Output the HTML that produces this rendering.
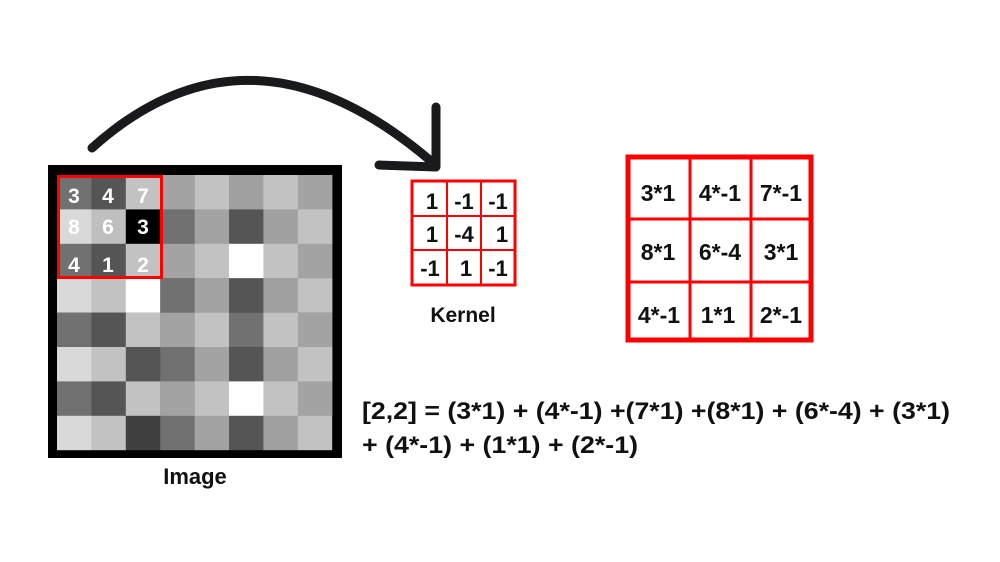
<!DOCTYPE html>
<html><head><style>
html,body{margin:0;padding:0;background:#fff;width:1000px;height:562px;overflow:hidden}
</style></head><body>
<svg width="1000" height="562" viewBox="0 0 1000 562" xmlns="http://www.w3.org/2000/svg" font-family="Liberation Sans, sans-serif" font-weight="bold">
<rect width="1000" height="562" fill="#fff"/>
<path d="M92,148 Q250,6 432,162" fill="none" stroke="#1a1a1c" stroke-width="9" stroke-linecap="round"/>
<path d="M436,107 L436,167 L379,165" fill="none" stroke="#1a1a1c" stroke-width="9" stroke-linecap="round" stroke-linejoin="round"/>
<rect x="48" y="165" width="294" height="293" fill="#000"/>
<g>
<rect x="57" y="175" width="34.6" height="34.6" fill="#717171"/><rect x="91.4" y="175" width="34.6" height="34.6" fill="#555"/><rect x="125.8" y="175" width="34.6" height="34.6" fill="#c2c2c2"/><rect x="160.2" y="175" width="34.6" height="34.6" fill="#a3a3a3"/><rect x="194.6" y="175" width="34.6" height="34.6" fill="#c2c2c2"/><rect x="229" y="175" width="34.6" height="34.6" fill="#a0a0a0"/><rect x="263.4" y="175" width="34.6" height="34.6" fill="#c2c2c2"/><rect x="297.8" y="175" width="34.6" height="34.6" fill="#a3a3a3"/>
<rect x="57" y="209.4" width="34.6" height="34.6" fill="#d9d9d9"/><rect x="91.4" y="209.4" width="34.6" height="34.6" fill="#bfbfbf"/><rect x="125.8" y="209.4" width="34.6" height="34.6" fill="#000"/><rect x="160.2" y="209.4" width="34.6" height="34.6" fill="#717171"/><rect x="194.6" y="209.4" width="34.6" height="34.6" fill="#a3a3a3"/><rect x="229" y="209.4" width="34.6" height="34.6" fill="#555"/><rect x="263.4" y="209.4" width="34.6" height="34.6" fill="#a0a0a0"/><rect x="297.8" y="209.4" width="34.6" height="34.6" fill="#c2c2c2"/>
<rect x="57" y="243.8" width="34.6" height="34.6" fill="#717171"/><rect x="91.4" y="243.8" width="34.6" height="34.6" fill="#555"/><rect x="125.8" y="243.8" width="34.6" height="34.6" fill="#c2c2c2"/><rect x="160.2" y="243.8" width="34.6" height="34.6" fill="#a3a3a3"/><rect x="194.6" y="243.8" width="34.6" height="34.6" fill="#c2c2c2"/><rect x="229" y="243.8" width="34.6" height="34.6" fill="#fff"/><rect x="263.4" y="243.8" width="34.6" height="34.6" fill="#c2c2c2"/><rect x="297.8" y="243.8" width="34.6" height="34.6" fill="#a3a3a3"/>
<rect x="57" y="278.2" width="34.6" height="34.6" fill="#d9d9d9"/><rect x="91.4" y="278.2" width="34.6" height="34.6" fill="#c2c2c2"/><rect x="125.8" y="278.2" width="34.6" height="34.6" fill="#fff"/><rect x="160.2" y="278.2" width="34.6" height="34.6" fill="#717171"/><rect x="194.6" y="278.2" width="34.6" height="34.6" fill="#a3a3a3"/><rect x="229" y="278.2" width="34.6" height="34.6" fill="#555"/><rect x="263.4" y="278.2" width="34.6" height="34.6" fill="#a0a0a0"/><rect x="297.8" y="278.2" width="34.6" height="34.6" fill="#c2c2c2"/>
<rect x="57" y="312.6" width="34.6" height="34.6" fill="#717171"/><rect x="91.4" y="312.6" width="34.6" height="34.6" fill="#555"/><rect x="125.8" y="312.6" width="34.6" height="34.6" fill="#c2c2c2"/><rect x="160.2" y="312.6" width="34.6" height="34.6" fill="#a3a3a3"/><rect x="194.6" y="312.6" width="34.6" height="34.6" fill="#c2c2c2"/><rect x="229" y="312.6" width="34.6" height="34.6" fill="#717171"/><rect x="263.4" y="312.6" width="34.6" height="34.6" fill="#c2c2c2"/><rect x="297.8" y="312.6" width="34.6" height="34.6" fill="#a3a3a3"/>
<rect x="57" y="347" width="34.6" height="34.6" fill="#d9d9d9"/><rect x="91.4" y="347" width="34.6" height="34.6" fill="#c2c2c2"/><rect x="125.8" y="347" width="34.6" height="34.6" fill="#555"/><rect x="160.2" y="347" width="34.6" height="34.6" fill="#717171"/><rect x="194.6" y="347" width="34.6" height="34.6" fill="#a3a3a3"/><rect x="229" y="347" width="34.6" height="34.6" fill="#555"/><rect x="263.4" y="347" width="34.6" height="34.6" fill="#a0a0a0"/><rect x="297.8" y="347" width="34.6" height="34.6" fill="#c2c2c2"/>
<rect x="57" y="381.4" width="34.6" height="34.6" fill="#717171"/><rect x="91.4" y="381.4" width="34.6" height="34.6" fill="#555"/><rect x="125.8" y="381.4" width="34.6" height="34.6" fill="#c2c2c2"/><rect x="160.2" y="381.4" width="34.6" height="34.6" fill="#a3a3a3"/><rect x="194.6" y="381.4" width="34.6" height="34.6" fill="#c2c2c2"/><rect x="229" y="381.4" width="34.6" height="34.6" fill="#fff"/><rect x="263.4" y="381.4" width="34.6" height="34.6" fill="#c2c2c2"/><rect x="297.8" y="381.4" width="34.6" height="34.6" fill="#a3a3a3"/>
<rect x="57" y="415.8" width="34.6" height="34.4" fill="#d9d9d9"/><rect x="91.4" y="415.8" width="34.6" height="34.4" fill="#c2c2c2"/><rect x="125.8" y="415.8" width="34.6" height="34.4" fill="#404040"/><rect x="160.2" y="415.8" width="34.6" height="34.4" fill="#717171"/><rect x="194.6" y="415.8" width="34.6" height="34.4" fill="#a3a3a3"/><rect x="229" y="415.8" width="34.6" height="34.4" fill="#555"/><rect x="263.4" y="415.8" width="34.6" height="34.4" fill="#a0a0a0"/><rect x="297.8" y="415.8" width="34.4" height="34.4" fill="#c2c2c2"/>
</g>
<rect x="58.5" y="176.5" width="103" height="101" fill="none" stroke="#f00" stroke-width="3"/>
<g fill="#fff" font-size="21" text-anchor="middle">
<text x="74" y="203">3</text><text x="108" y="203">4</text><text x="143" y="203">7</text>
<text x="74" y="234">8</text><text x="108" y="234">6</text><text x="143" y="234">3</text>
<text x="74" y="272">4</text><text x="108" y="272">1</text><text x="143" y="272">2</text>
</g>
<text x="195" y="484" font-size="22" text-anchor="middle" fill="#111">Image</text>
<g fill="none" stroke="#f00">
<rect x="412" y="181" width="103" height="104" stroke-width="3"/>
<line x1="447" y1="181" x2="447" y2="285" stroke-width="2"/>
<line x1="481" y1="181" x2="481" y2="285" stroke-width="2"/>
<line x1="412" y1="216" x2="515" y2="216" stroke-width="2"/>
<line x1="412" y1="250" x2="515" y2="250" stroke-width="2"/>
</g>
<g fill="#111" font-size="22" text-anchor="middle">
<text x="432" y="209">1</text><text x="464" y="209">-1</text><text x="498" y="209">-1</text>
<text x="432" y="242">1</text><text x="464" y="242">-4</text><text x="502" y="242">1</text>
<text x="430" y="276">-1</text><text x="466" y="276">1</text><text x="498" y="276">-1</text>
</g>
<text x="463" y="322" font-size="21" text-anchor="middle" fill="#111">Kernel</text>
<g fill="none" stroke="#f00">
<rect x="628" y="157" width="183" height="183" stroke-width="5"/>
<line x1="690" y1="157" x2="690" y2="340" stroke-width="3"/>
<line x1="751" y1="157" x2="751" y2="340" stroke-width="3"/>
<line x1="628" y1="219" x2="811" y2="219" stroke-width="3"/>
<line x1="628" y1="282" x2="811" y2="282" stroke-width="3"/>
</g>
<g fill="#111" font-size="23" text-anchor="middle">
<text x="658" y="201">3*1</text><text x="720" y="201">4*-1</text><text x="781" y="201">7*-1</text>
<text x="658" y="260">8*1</text><text x="720" y="260">6*-4</text><text x="781" y="260">3*1</text>
<text x="659" y="323">4*-1</text><text x="718" y="323">1*1</text><text x="781" y="323">2*-1</text>
</g>
<g fill="#111" font-size="24">
<text x="362" y="419" textLength="588" lengthAdjust="spacingAndGlyphs">[2,2] = (3*1) + (4*-1) +(7*1) +(8*1) + (6*-4) + (3*1)</text>
<text x="362" y="453" textLength="276" lengthAdjust="spacingAndGlyphs">+ (4*-1) + (1*1) + (2*-1)</text>
</g>
</svg>
</body></html>
